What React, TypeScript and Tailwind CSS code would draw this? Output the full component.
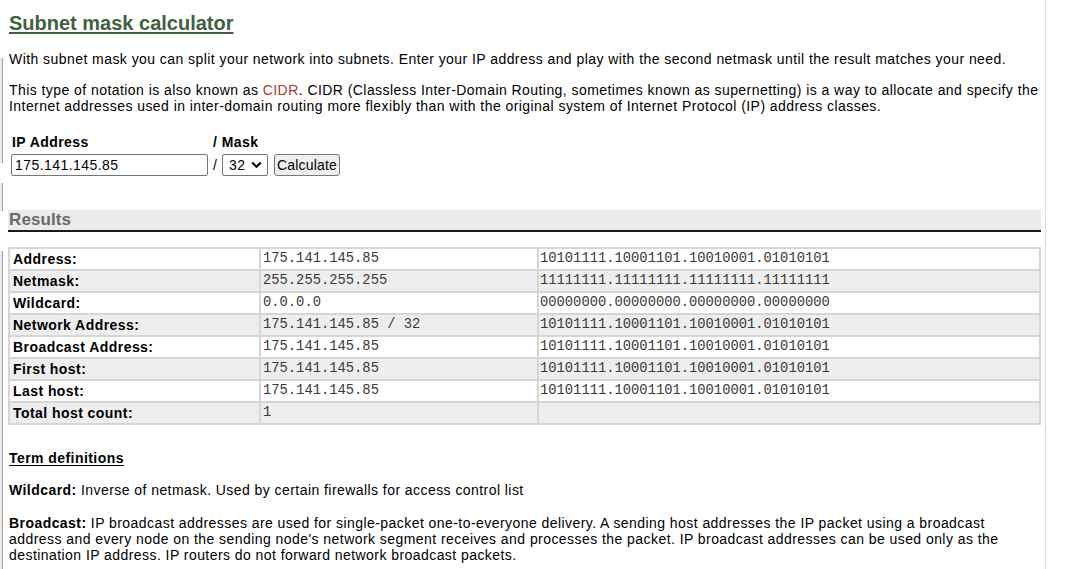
import React from "react";

const rows: [string, string, string][] = [
  ["Address:", "175.141.145.85", "10101111.10001101.10010001.01010101"],
  ["Netmask:", "255.255.255.255", "11111111.11111111.11111111.11111111"],
  ["Wildcard:", "0.0.0.0", "00000000.00000000.00000000.00000000"],
  ["Network Address:", "175.141.145.85 / 32", "10101111.10001101.10010001.01010101"],
  ["Broadcast Address:", "175.141.145.85", "10101111.10001101.10010001.01010101"],
  ["First host:", "175.141.145.85", "10101111.10001101.10010001.01010101"],
  ["Last host:", "175.141.145.85", "10101111.10001101.10010001.01010101"],
  ["Total host count:", "1", ""],
];

export default function App() {
  return (
    <div className="relative w-[1069px] h-[569px] overflow-hidden bg-white text-black font-['Liberation_Sans',Arial,sans-serif] text-[14px] leading-[16px] tracking-[0.44px]">
      {/* left edge decorations */}
      <div className="absolute left-0 top-[58px] w-[3px] h-[105px] bg-[#ececec] border-r border-[#a0a0a0]" />
      <div className="absolute left-0 top-[183px] w-[3px] h-[28px] bg-[#ececec] border-r border-[#a0a0a0]" />
      <div className="absolute left-0 top-[251px] w-[3px] h-[318px] bg-[#ececec] border-r border-[#a0a0a0]" />
      {/* right edge line */}
      <div className="absolute left-[1045px] top-0 w-px h-[569px] bg-[#dcdcdc]" />

      <div className="ml-[8px] w-[1033px] pt-[12px]">
        <h1 className="pl-px text-[20px] leading-[23px] font-bold tracking-normal text-[#41603f] underline underline-offset-[2px]">
          Subnet mask calculator
        </h1>
        <p className="mt-[15.5px] pl-px">
          With subnet mask you can split your network into subnets. Enter your IP address and play with the second netmask until the result matches your need.
        </p>
        <p className="mt-[15.5px] pl-px w-[1045px]">
          This type of notation is also known as <span className="text-[#a0412d]">CIDR</span>. CIDR (Classless Inter-Domain Routing, sometimes known as supernetting) is a way to allocate and specify the Internet addresses used in inter-domain routing more flexibly than with the original system of Internet Protocol (IP) address classes.
        </p>

        <div className="mt-[19.5px] pl-[3px]">
          <div className="flex h-[20.5px] font-bold">
            <div className="w-[202px] pl-px">IP Address</div>
            <div>/ Mask</div>
          </div>
          <div className="flex items-center h-[22px]">
            <div className="w-[197px] h-[22px] border border-[#767676] rounded-[2px] flex items-center pl-[3px] text-[14px]">
              175.141.145.85
            </div>
            <span className="ml-[5px] w-[4px]">/</span>
            <div className="ml-[5px] w-[46px] h-[22px] border border-[#767676] rounded-[2px] flex items-center pl-[6px] gap-[6px]">
              <span>32</span>
              <svg width="11" height="8" viewBox="0 0 11 8">
                <path d="M1.2 1.5 L5.5 5.8 L9.8 1.5" fill="none" stroke="#000" strokeWidth="2" />
              </svg>
            </div>
            <div className="ml-[6px] w-[66px] h-[22px] border border-[#767676] rounded-[3px] bg-[#efefef] flex items-center justify-center tracking-[0.2px]">
              Calculate
            </div>
          </div>
        </div>

        <div className="mt-[34px] h-[22px] bg-[#ebebeb] border-b-2 border-[#1a1a1a] flex items-end pb-0 pl-px">
          <span className="text-[17px] leading-[20px] font-bold tracking-[0.1px] text-[#6b6b6b]">Results</span>
        </div>

        <table className="mt-[15px] w-[1033px] border-collapse border-2 border-[#d6d6d6]">
          <tbody>
            {rows.map((r, i) => (
              <tr key={i} className={i % 2 === 1 ? "bg-[#eeeeee]" : "bg-white"}>
                <td className="w-[251px] h-[22px] p-0 pl-[3px] border-2 border-[#d6d6d6] font-bold leading-[18px]">
                  {r[0]}
                </td>
                <td className="w-[278px] h-[22px] p-0 pl-[2px] border-2 border-[#d6d6d6] font-['Liberation_Mono','Courier_New',monospace] text-[13.8px] tracking-normal text-[#3a3a3a] leading-[18px]">
                  {r[1]}
                </td>
                <td className="h-[22px] p-0 pl-[1px] border-2 border-[#d6d6d6] font-['Liberation_Mono','Courier_New',monospace] text-[13.8px] tracking-normal text-[#3a3a3a] leading-[18px]">
                  {r[2]}
                </td>
              </tr>
            ))}
          </tbody>
        </table>

        <p className="mt-[25px] pl-px font-bold underline underline-offset-[2px]">Term definitions</p>
        <p className="mt-[15.5px] pl-px">
          <b>Wildcard:</b> Inverse of netmask. Used by certain firewalls for access control list
        </p>
        <p className="mt-[17px] pl-px">
          <b>Broadcast:</b> IP broadcast addresses are used for single-packet one-to-everyone delivery. A sending host addresses the IP packet using a broadcast address and every node on the sending node's network segment receives and processes the packet. IP broadcast addresses can be used only as the destination IP address. IP routers do not forward network broadcast packets.
        </p>
      </div>
    </div>
  );
}
